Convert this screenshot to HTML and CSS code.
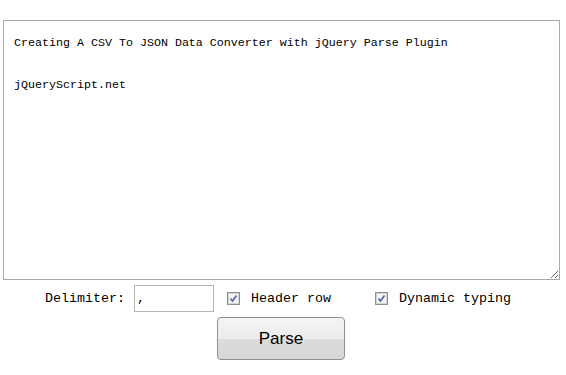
FILE: index.html
```html
<!DOCTYPE html>
<html lang="en">
<head>
  <meta charset="UTF-8" />
  <title>CSV To JSON Converter</title>
  <link rel="stylesheet" href="styles.css">
</head>
<body>

  <div class="converter">
    <textarea class="input-text" id="input">Creating A CSV To JSON Data Converter with jQuery Parse Plugin

jQueryScript.net</textarea>

    <div class="options">
      <label class="opt-label" for="delimiter">Delimiter:</label>
      <input type="text" class="delimiter" id="delimiter" value=",">
      <label class="check">
        <input type="checkbox" checked>
        <svg class="box" width="13" height="13" viewBox="0 0 13 13">
          <rect x="0.5" y="0.5" width="12" height="12" fill="#e6e6e6" stroke="#8f8f8f"/>
          <rect x="1.5" y="1.5" width="10" height="10" fill="#f4f4f4" stroke="#d2d2d2"/>
          <path d="M3.5 6.5 L5.5 9 L9.5 3.5" fill="none" stroke="#4a5fa8" stroke-width="1.6"/>
        </svg>
        <span>Header row</span>
      </label>
      <label class="check check-last">
        <input type="checkbox" checked>
        <svg class="box" width="13" height="13" viewBox="0 0 13 13">
          <rect x="0.5" y="0.5" width="12" height="12" fill="#e6e6e6" stroke="#8f8f8f"/>
          <rect x="1.5" y="1.5" width="10" height="10" fill="#f4f4f4" stroke="#d2d2d2"/>
          <path d="M3.5 6.5 L5.5 9 L9.5 3.5" fill="none" stroke="#4a5fa8" stroke-width="1.6"/>
        </svg>
        <span>Dynamic typing</span>
      </label>
    </div>

    <button class="parse-btn" id="parse">Parse</button>
  </div>

</body>
</html>
```

FILE: styles.css
```css
* {
  box-sizing: border-box;
}

body {
  margin: 0;
  background: #fff;
  font-family: "Liberation Mono", "DejaVu Sans Mono", monospace;
  color: #000;
}

.converter {
  padding-top: 20px;
  display: flex;
  flex-direction: column;
  align-items: center;
}

.input-text {
  display: block;
  width: 557px;
  height: 260px;
  margin: 0 0 0 -3px;
  padding: 12px 10px 10px;
  border: 1px solid #a9a9a9;
  font-family: "Liberation Mono", monospace;
  font-size: 11.67px;
  line-height: 21px;
  resize: both;
  outline: none;
}

.options {
  display: flex;
  align-items: center;
  margin-top: 5px;
  margin-left: -10px;
  font-size: 13.33px;
}

.opt-label {
  margin-right: 9px;
}

.delimiter {
  width: 80px;
  height: 27px;
  margin: 0;
  padding: 2px 2px;
  border: 1px solid #b5b5b5;
  font-family: "Liberation Mono", monospace;
  font-size: 13.33px;
}

.check {
  display: flex;
  align-items: center;
  margin-left: 13px;
}

.check input {
  display: none;
}

.check .box {
  margin-right: 11px;
}

.check-last {
  margin-left: 44px;
}

.parse-btn {
  margin: 5px 0 0 -4px;
  width: 128px;
  height: 43px;
  border: 1px solid #8f8f8f;
  border-radius: 4px;
  background: linear-gradient(#f4f4f4 0%, #ececec 50%, #dcdcdc 51%, #d6d6d6 100%);
  font-family: "Liberation Sans", Arial, sans-serif;
  font-size: 17px;
  color: #000;
  cursor: pointer;
}
```
